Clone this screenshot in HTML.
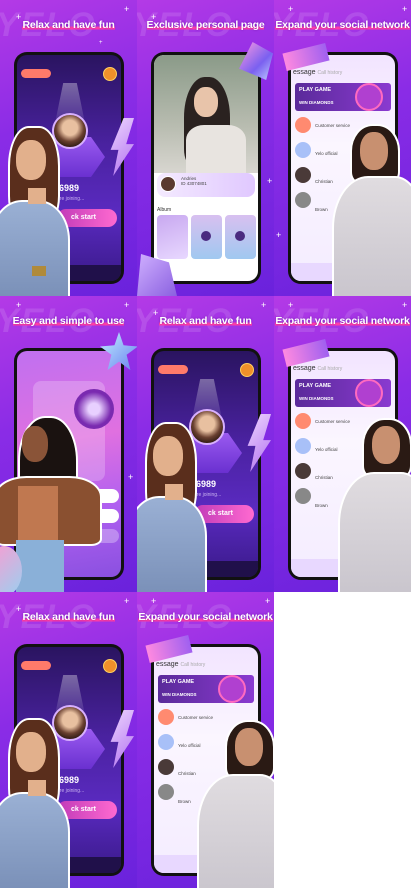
<!DOCTYPE html>
<html><head><meta charset="utf-8"><style>
*{margin:0;padding:0;box-sizing:border-box}
body{width:411px;height:888px;background:#fff;position:relative;overflow:hidden;font-family:"Liberation Sans",sans-serif}
.t{position:absolute;width:137px;height:296px;overflow:hidden;background:linear-gradient(160deg,#b43ae6 0%,#8a2ce6 40%,#6a22dc 100%)}
.a{position:absolute}
.yelo{position:absolute;left:-4px;top:6px;font:italic 900 34px "Liberation Sans",sans-serif;color:rgba(255,255,255,.12);letter-spacing:2px}
.ttl{position:absolute;left:0;width:137px;top:19px;text-align:center;color:#fff;font:bold 10.5px "Liberation Sans",sans-serif;letter-spacing:-.2px;text-shadow:0 0 2px rgba(90,0,140,.6)}
.ttl span{background:linear-gradient(transparent 62%,#ff3fa8 62%,#ff3fa8 88%,transparent 88%)}
.ph{position:absolute;left:14px;top:52px;width:110px;height:232px;border-radius:13px;background:#111;padding:3px}
.sc{position:relative;width:100%;height:100%;border-radius:10px;overflow:hidden}
.sp{position:absolute;color:#fff;font-size:9px}
</style></head><body>

<!-- ===== TILE A (reused) ===== -->
<div class="t" style="left:0;top:0">
<div class="yelo">YELO</div><div class="ttl"><span>Relax and have fun</span></div>
<div class="sp" style="left:16px;top:12px">+</div><div class="sp" style="left:124px;top:4px">+</div><div class="sp" style="left:99px;top:40px;font-size:6px">+</div>
<div class="ph"><div class="sc" style="background:linear-gradient(180deg,#2a1460 0%,#4a22a0 40%,#5a2ac0 70%,#3a1a8a 100%)">
<div class="a" style="left:4px;top:14px;width:30px;height:9px;border-radius:5px;background:#ff7a6a"></div>
<div class="a" style="left:86px;top:12px;width:14px;height:14px;border-radius:50%;background:#f0902a;border:1px solid #ffd060"></div>
<div class="a" style="left:36px;top:28px;width:34px;height:50px;background:linear-gradient(180deg,rgba(255,255,255,.35),rgba(255,255,255,0));clip-path:polygon(30% 0,70% 0,100% 100%,0 100%)"></div>
<div class="a" style="left:18px;top:82px;width:70px;height:40px;background:linear-gradient(180deg,#9a5af0,#6a30d0);clip-path:polygon(20% 0,80% 0,100% 50%,80% 100%,20% 100%,0 50%)"></div>
<div class="a" style="left:35px;top:58px;width:36px;height:36px;border-radius:50%;background:radial-gradient(circle at 50% 40%,#e8c0a0 30%,#6a4030 55%,#2a1810 80%);border:2px solid #d8b0ff"></div>
<div class="a" style="left:42px;top:128px;color:#fff;font:bold 9px 'Liberation Sans'">6989</div>
<div class="a" style="left:40px;top:141px;color:#c8b0f0;font-size:5px">are joining...</div>
<div class="a" style="left:40px;top:154px;width:60px;height:18px;border-radius:9px;background:linear-gradient(90deg,#c03ab8,#ff6ad0);color:#fff;font:bold 7px 'Liberation Sans';line-height:18px;padding-left:14px">ck start</div>
<div class="a" style="left:0;bottom:0;width:104px;height:16px;background:#20104a"></div>
</div></div>
<div class="a" style="left:108px;top:118px;width:26px;height:58px;background:linear-gradient(135deg,#f0d8ff,#b070f0);clip-path:polygon(60% 0,100% 0,70% 45%,100% 45%,20% 100%,40% 55%,10% 55%)"></div>
<div class="a" style="left:8px;top:126px;width:52px;height:100px;border-radius:40% 40% 30% 30%;background:#5a2e1c;border:2px solid #fff"></div>
<div class="a" style="left:16px;top:140px;width:30px;height:40px;border-radius:45%;background:#e2b08c"></div>
<div class="a" style="left:-10px;top:200px;width:80px;height:100px;border-radius:40% 40% 0 0;background:linear-gradient(180deg,#9ab0d4,#7a90b8);border:2px solid #fff"></div>
<div class="a" style="left:28px;top:188px;width:18px;height:16px;background:#e2b08c"></div>
<div class="a" style="left:32px;top:266px;width:14px;height:10px;background:#b08a3a"></div>
</div>

<div class="t" style="left:137px;top:296px">
<div class="yelo">YELO</div><div class="ttl"><span>Relax and have fun</span></div>
<div class="sp" style="left:16px;top:12px">+</div><div class="sp" style="left:124px;top:4px">+</div>
<div class="ph"><div class="sc" style="background:linear-gradient(180deg,#2a1460 0%,#4a22a0 40%,#5a2ac0 70%,#3a1a8a 100%)">
<div class="a" style="left:4px;top:14px;width:30px;height:9px;border-radius:5px;background:#ff7a6a"></div>
<div class="a" style="left:86px;top:12px;width:14px;height:14px;border-radius:50%;background:#f0902a;border:1px solid #ffd060"></div>
<div class="a" style="left:36px;top:28px;width:34px;height:50px;background:linear-gradient(180deg,rgba(255,255,255,.35),rgba(255,255,255,0));clip-path:polygon(30% 0,70% 0,100% 100%,0 100%)"></div>
<div class="a" style="left:18px;top:82px;width:70px;height:40px;background:linear-gradient(180deg,#9a5af0,#6a30d0);clip-path:polygon(20% 0,80% 0,100% 50%,80% 100%,20% 100%,0 50%)"></div>
<div class="a" style="left:35px;top:58px;width:36px;height:36px;border-radius:50%;background:radial-gradient(circle at 50% 40%,#e8c0a0 30%,#6a4030 55%,#2a1810 80%);border:2px solid #d8b0ff"></div>
<div class="a" style="left:42px;top:128px;color:#fff;font:bold 9px 'Liberation Sans'">6989</div>
<div class="a" style="left:40px;top:141px;color:#c8b0f0;font-size:5px">are joining...</div>
<div class="a" style="left:40px;top:154px;width:60px;height:18px;border-radius:9px;background:linear-gradient(90deg,#c03ab8,#ff6ad0);color:#fff;font:bold 7px 'Liberation Sans';line-height:18px;padding-left:14px">ck start</div>
<div class="a" style="left:0;bottom:0;width:104px;height:16px;background:#20104a"></div>
</div></div>
<div class="a" style="left:108px;top:118px;width:26px;height:58px;background:linear-gradient(135deg,#f0d8ff,#b070f0);clip-path:polygon(60% 0,100% 0,70% 45%,100% 45%,20% 100%,40% 55%,10% 55%)"></div>
<div class="a" style="left:8px;top:126px;width:52px;height:100px;border-radius:40% 40% 30% 30%;background:#5a2e1c;border:2px solid #fff"></div>
<div class="a" style="left:16px;top:140px;width:30px;height:40px;border-radius:45%;background:#e2b08c"></div>
<div class="a" style="left:-10px;top:200px;width:80px;height:100px;border-radius:40% 40% 0 0;background:linear-gradient(180deg,#9ab0d4,#7a90b8);border:2px solid #fff"></div>
<div class="a" style="left:28px;top:188px;width:18px;height:16px;background:#e2b08c"></div>
</div>

<div class="t" style="left:0;top:592px">
<div class="yelo">YELO</div><div class="ttl"><span>Relax and have fun</span></div>
<div class="sp" style="left:16px;top:12px">+</div><div class="sp" style="left:124px;top:4px">+</div>
<div class="ph"><div class="sc" style="background:linear-gradient(180deg,#2a1460 0%,#4a22a0 40%,#5a2ac0 70%,#3a1a8a 100%)">
<div class="a" style="left:4px;top:14px;width:30px;height:9px;border-radius:5px;background:#ff7a6a"></div>
<div class="a" style="left:86px;top:12px;width:14px;height:14px;border-radius:50%;background:#f0902a;border:1px solid #ffd060"></div>
<div class="a" style="left:36px;top:28px;width:34px;height:50px;background:linear-gradient(180deg,rgba(255,255,255,.35),rgba(255,255,255,0));clip-path:polygon(30% 0,70% 0,100% 100%,0 100%)"></div>
<div class="a" style="left:18px;top:82px;width:70px;height:40px;background:linear-gradient(180deg,#9a5af0,#6a30d0);clip-path:polygon(20% 0,80% 0,100% 50%,80% 100%,20% 100%,0 50%)"></div>
<div class="a" style="left:35px;top:58px;width:36px;height:36px;border-radius:50%;background:radial-gradient(circle at 50% 40%,#e8c0a0 30%,#6a4030 55%,#2a1810 80%);border:2px solid #d8b0ff"></div>
<div class="a" style="left:42px;top:128px;color:#fff;font:bold 9px 'Liberation Sans'">6989</div>
<div class="a" style="left:40px;top:141px;color:#c8b0f0;font-size:5px">are joining...</div>
<div class="a" style="left:40px;top:154px;width:60px;height:18px;border-radius:9px;background:linear-gradient(90deg,#c03ab8,#ff6ad0);color:#fff;font:bold 7px 'Liberation Sans';line-height:18px;padding-left:14px">ck start</div>
<div class="a" style="left:0;bottom:0;width:104px;height:16px;background:#20104a"></div>
</div></div>
<div class="a" style="left:108px;top:118px;width:26px;height:58px;background:linear-gradient(135deg,#f0d8ff,#b070f0);clip-path:polygon(60% 0,100% 0,70% 45%,100% 45%,20% 100%,40% 55%,10% 55%)"></div>
<div class="a" style="left:8px;top:126px;width:52px;height:100px;border-radius:40% 40% 30% 30%;background:#5a2e1c;border:2px solid #fff"></div>
<div class="a" style="left:16px;top:140px;width:30px;height:40px;border-radius:45%;background:#e2b08c"></div>
<div class="a" style="left:-10px;top:200px;width:80px;height:100px;border-radius:40% 40% 0 0;background:linear-gradient(180deg,#9ab0d4,#7a90b8);border:2px solid #fff"></div>
<div class="a" style="left:28px;top:188px;width:18px;height:16px;background:#e2b08c"></div>
</div>

<!-- ===== TILE B ===== -->
<div class="t" style="left:137px;top:0">
<div class="yelo">YELO</div><div class="ttl"><span>Exclusive personal page</span></div>
<div class="sp" style="left:14px;top:12px">+</div><div class="sp" style="left:130px;top:176px">+</div>
<div class="ph" style="left:14px;top:52px;width:110px;height:232px"><div class="sc" style="background:#fff">
<div class="a" style="left:0;top:0;width:104px;height:118px;background:linear-gradient(180deg,#8a9a88,#b8bcb0 60%,#d8d6d0)"></div>
<div class="a" style="left:30px;top:22px;width:46px;height:90px;border-radius:45% 45% 20% 20%;background:#2a2220"></div>
<div class="a" style="left:40px;top:32px;width:24px;height:30px;border-radius:45%;background:#e8c4aa"></div>
<div class="a" style="left:32px;top:70px;width:60px;height:50px;border-radius:30% 30% 0 0;background:#e8e4e0"></div>
<div class="a" style="left:3px;top:118px;width:98px;height:24px;border-radius:8px;background:linear-gradient(90deg,#f4eaff,#e0c8ff)"></div>
<div class="a" style="left:6px;top:121px;width:16px;height:16px;border-radius:50%;background:#5a3a30;border:1px solid #fff"></div>
<div class="a" style="left:27px;top:121px;font-size:4.5px;color:#444">Andries<br>ID 43074801</div>
<div class="a" style="left:3px;top:152px;font-size:5px;color:#333">Album</div>
<div class="a" style="left:3px;top:160px;width:31px;height:44px;border-radius:4px;background:linear-gradient(160deg,#c8a8f0,#e8d8ff)"></div>
<div class="a" style="left:37px;top:160px;width:31px;height:44px;border-radius:4px;background:linear-gradient(180deg,#d8c0f0,#a0c8f0)"></div>
<div class="a" style="left:71px;top:160px;width:31px;height:44px;border-radius:4px;background:linear-gradient(180deg,#d8c0f0,#a0c8f0)"></div>
<div class="a" style="left:47px;top:176px;width:10px;height:10px;border-radius:50%;background:#4a2a80"></div>
<div class="a" style="left:81px;top:176px;width:10px;height:10px;border-radius:50%;background:#4a2a80"></div>
</div></div>
<div class="a" style="left:102px;top:42px;width:34px;height:38px;background:linear-gradient(135deg,#ff9ae0,#7a60f0 60%,#c0d0ff);clip-path:polygon(40% 0,100% 30%,80% 100%,0 70%)"></div>
<div class="a" style="left:0;top:254px;width:40px;height:42px;background:linear-gradient(135deg,#d0b0ff,#8a60e0);clip-path:polygon(10% 0,80% 20%,100% 100%,0 100%)"></div>
</div>

<!-- ===== TILE C (reused) ===== -->
<div class="t" style="left:274px;top:0">
<div class="yelo">YELO</div><div class="ttl"><span>Expand your social network</span></div>
<div class="sp" style="left:14px;top:4px">+</div><div class="sp" style="left:128px;top:4px">+</div><div class="sp" style="left:2px;top:230px">+</div>
<div class="ph"><div class="sc" style="background:linear-gradient(180deg,#f2e4ff,#fbf6ff 40%,#f4ecff)">
<div class="a" style="left:2px;top:14px;font-size:7px;color:#333">essage <span style="font-size:5px;color:#aaa">Call history</span></div>
<div class="a" style="left:4px;top:28px;width:96px;height:28px;border-radius:3px;background:linear-gradient(90deg,#5a2a9a,#8a3ad0)"></div>
<div class="a" style="left:8px;top:32px;color:#fff;font:bold 5.5px 'Liberation Sans'">PLAY GAME</div>
<div class="a" style="left:8px;top:45px;color:#fff;font:bold 4.5px 'Liberation Sans'">WIN DIAMONDS</div>
<div class="a" style="left:64px;top:28px;width:28px;height:28px;border-radius:50%;background:#b040d0;border:2px solid #ff6ac0"></div>
<div class="a" style="left:4px;top:62px;width:16px;height:16px;border-radius:50%;background:#ff8a70"></div>
<div class="a" style="left:4px;top:87px;width:16px;height:16px;border-radius:50%;background:#a8c0f8"></div>
<div class="a" style="left:4px;top:112px;width:16px;height:16px;border-radius:50%;background:#4a3a38"></div>
<div class="a" style="left:4px;top:137px;width:16px;height:16px;border-radius:50%;background:#888"></div>
<div class="a" style="left:24px;top:64px;font-size:4.5px;color:#444;line-height:14px">Customer service<br><br>Yelo official<br><br>Christian<br><br>Brown</div>
<div class="a" style="left:0;bottom:0;width:104px;height:18px;background:#e8d8ff"></div>
</div></div>
<div class="a" style="left:10px;top:48px;width:44px;height:18px;background:linear-gradient(90deg,#ff8ae0,#a060f0);transform:rotate(-14deg)"></div>
<div class="a" style="left:76px;top:124px;width:50px;height:60px;border-radius:45% 45% 20% 20%;background:#2a1a14;border:2px solid #fff"></div>
<div class="a" style="left:86px;top:132px;width:28px;height:38px;border-radius:45%;background:#c89070"></div>
<div class="a" style="left:58px;top:176px;width:90px;height:130px;border-radius:40% 30% 0 0;background:linear-gradient(180deg,#e0dce0,#c8c4cc);border:2px solid #fff"></div>
</div>

<div class="t" style="left:274px;top:296px">
<div class="yelo">YELO</div><div class="ttl"><span>Expand your social network</span></div>
<div class="sp" style="left:14px;top:4px">+</div><div class="sp" style="left:128px;top:4px">+</div>
<div class="ph"><div class="sc" style="background:linear-gradient(180deg,#f2e4ff,#fbf6ff 40%,#f4ecff)">
<div class="a" style="left:2px;top:14px;font-size:7px;color:#333">essage <span style="font-size:5px;color:#aaa">Call history</span></div>
<div class="a" style="left:4px;top:28px;width:96px;height:28px;border-radius:3px;background:linear-gradient(90deg,#5a2a9a,#8a3ad0)"></div>
<div class="a" style="left:8px;top:32px;color:#fff;font:bold 5.5px 'Liberation Sans'">PLAY GAME</div>
<div class="a" style="left:8px;top:45px;color:#fff;font:bold 4.5px 'Liberation Sans'">WIN DIAMONDS</div>
<div class="a" style="left:64px;top:28px;width:28px;height:28px;border-radius:50%;background:#b040d0;border:2px solid #ff6ac0"></div>
<div class="a" style="left:4px;top:62px;width:16px;height:16px;border-radius:50%;background:#ff8a70"></div>
<div class="a" style="left:4px;top:87px;width:16px;height:16px;border-radius:50%;background:#a8c0f8"></div>
<div class="a" style="left:4px;top:112px;width:16px;height:16px;border-radius:50%;background:#4a3a38"></div>
<div class="a" style="left:4px;top:137px;width:16px;height:16px;border-radius:50%;background:#888"></div>
<div class="a" style="left:24px;top:64px;font-size:4.5px;color:#444;line-height:14px">Customer service<br><br>Yelo official<br><br>Christian<br><br>Brown</div>
<div class="a" style="left:0;bottom:0;width:104px;height:18px;background:#e8d8ff"></div>
</div></div>
<div class="a" style="left:10px;top:48px;width:44px;height:18px;background:linear-gradient(90deg,#ff8ae0,#a060f0);transform:rotate(-14deg)"></div>
<div class="a" style="left:88px;top:122px;width:50px;height:60px;border-radius:45% 45% 20% 20%;background:#2a1a14;border:2px solid #fff"></div>
<div class="a" style="left:98px;top:130px;width:28px;height:38px;border-radius:45%;background:#c89070"></div>
<div class="a" style="left:64px;top:176px;width:90px;height:130px;border-radius:40% 30% 0 0;background:linear-gradient(180deg,#e0dce0,#c8c4cc);border:2px solid #fff"></div>
</div>

<div class="t" style="left:137px;top:592px">
<div class="yelo">YELO</div><div class="ttl"><span>Expand your social network</span></div>
<div class="sp" style="left:14px;top:4px">+</div><div class="sp" style="left:128px;top:4px">+</div>
<div class="ph"><div class="sc" style="background:linear-gradient(180deg,#f2e4ff,#fbf6ff 40%,#f4ecff)">
<div class="a" style="left:2px;top:14px;font-size:7px;color:#333">essage <span style="font-size:5px;color:#aaa">Call history</span></div>
<div class="a" style="left:4px;top:28px;width:96px;height:28px;border-radius:3px;background:linear-gradient(90deg,#5a2a9a,#8a3ad0)"></div>
<div class="a" style="left:8px;top:32px;color:#fff;font:bold 5.5px 'Liberation Sans'">PLAY GAME</div>
<div class="a" style="left:8px;top:45px;color:#fff;font:bold 4.5px 'Liberation Sans'">WIN DIAMONDS</div>
<div class="a" style="left:64px;top:28px;width:28px;height:28px;border-radius:50%;background:#b040d0;border:2px solid #ff6ac0"></div>
<div class="a" style="left:4px;top:62px;width:16px;height:16px;border-radius:50%;background:#ff8a70"></div>
<div class="a" style="left:4px;top:87px;width:16px;height:16px;border-radius:50%;background:#a8c0f8"></div>
<div class="a" style="left:4px;top:112px;width:16px;height:16px;border-radius:50%;background:#4a3a38"></div>
<div class="a" style="left:4px;top:137px;width:16px;height:16px;border-radius:50%;background:#888"></div>
<div class="a" style="left:24px;top:64px;font-size:4.5px;color:#444;line-height:14px">Customer service<br><br>Yelo official<br><br>Christian<br><br>Brown</div>
<div class="a" style="left:0;bottom:0;width:104px;height:18px;background:#e8d8ff"></div>
</div></div>
<div class="a" style="left:10px;top:48px;width:44px;height:18px;background:linear-gradient(90deg,#ff8ae0,#a060f0);transform:rotate(-14deg)"></div>
<div class="a" style="left:88px;top:128px;width:50px;height:60px;border-radius:45% 45% 20% 20%;background:#2a1a14;border:2px solid #fff"></div>
<div class="a" style="left:98px;top:136px;width:28px;height:38px;border-radius:45%;background:#c89070"></div>
<div class="a" style="left:60px;top:182px;width:90px;height:130px;border-radius:40% 30% 0 0;background:linear-gradient(180deg,#e0dce0,#c8c4cc);border:2px solid #fff"></div>
</div>

<!-- ===== TILE D ===== -->
<div class="t" style="left:0;top:296px">
<div class="yelo">YELO</div><div class="ttl"><span>Easy and simple to use</span></div>
<div class="sp" style="left:16px;top:4px">+</div><div class="sp" style="left:124px;top:4px">+</div><div class="sp" style="left:128px;top:176px">+</div>
<div class="ph"><div class="sc" style="background:linear-gradient(170deg,#c070f0 0%,#e070e0 40%,#b060f0 70%,#8a50e0 100%)">
<div class="a" style="left:16px;top:30px;width:72px;height:100px;border-radius:8px;background:rgba(255,255,255,.22)"></div>
<div class="a" style="left:57px;top:38px;width:40px;height:40px;border-radius:50%;background:radial-gradient(circle,#e8d0ff 20%,#7a2ab0 60%)"></div>
<div class="a" style="left:46px;top:138px;width:56px;height:14px;border-radius:7px;background:#fff"></div>
<div class="a" style="left:46px;top:158px;width:56px;height:14px;border-radius:7px;background:#fff"></div>
<div class="a" style="left:46px;top:178px;width:56px;height:14px;border-radius:7px;background:rgba(255,255,255,.3)"></div>
</div></div>
<div class="a" style="left:100px;top:36px;width:38px;height:38px;background:linear-gradient(135deg,#c0f0ff,#6a80f0);clip-path:polygon(50% 0,62% 35%,100% 38%,70% 60%,80% 100%,50% 78%,20% 100%,30% 60%,0 38%,38% 35%)"></div>
<div class="a" style="left:18px;top:120px;width:60px;height:100px;border-radius:45% 45% 20% 20%;background:#1a1210;border:2px solid #fff"></div>
<div class="a" style="left:22px;top:130px;width:26px;height:36px;border-radius:45%;background:#8a5438"></div>
<div class="a" style="left:-6px;top:180px;width:108px;height:70px;border-radius:30% 30% 10% 10%;background:#8a5030;border:2px solid #fff"></div>
<div class="a" style="left:18px;top:190px;width:40px;height:56px;background:#c07850"></div>
<div class="a" style="left:16px;top:244px;width:48px;height:52px;background:#8ab0d8"></div>
<div class="a" style="left:-14px;top:250px;width:36px;height:50px;border-radius:50%;background:linear-gradient(135deg,#ff9ad0,#9ad0f0)"></div>
</div>

</body></html>
